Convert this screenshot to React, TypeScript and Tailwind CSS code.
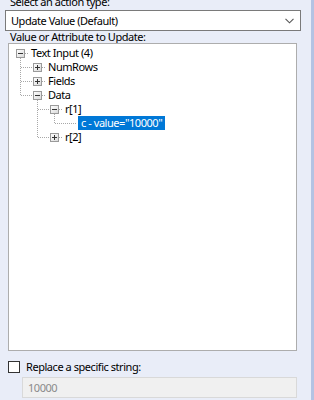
import React from "react";

const font = { fontFamily: '"Noto Sans", "Liberation Sans", sans-serif' };

function Glyph({ open }: { open: boolean }) {
  return (
    <svg width="9" height="9" viewBox="0 0 9 9" className="shrink-0">
      <defs>
        <linearGradient id="gb" x1="0" y1="0" x2="1" y2="1">
          <stop offset="0" stopColor="#ffffff" />
          <stop offset="1" stopColor="#d8d8d8" />
        </linearGradient>
      </defs>
      <rect x="0.5" y="0.5" width="8" height="8" fill="url(#gb)" stroke="#9a9a9a" />
      <line x1="2" y1="4.5" x2="7" y2="4.5" stroke="#333" />
      {!open && <line x1="4.5" y1="2" x2="4.5" y2="7" stroke="#333" />}
    </svg>
  );
}

const txt = "text-[11px] leading-[14px] tracking-[-0.45px] text-[#000]";

function Row({
  level,
  open,
  label,
}: {
  level: number;
  open: boolean;
  label: string;
}) {
  const pads = ["pl-[7px]", "pl-[24px]", "pl-[41px]"];
  return (
    <div className={`flex h-[14px] items-center ${pads[level]}`}>
      <Glyph open={open} />
      <span className={`ml-[6px] ${txt}`}>{label}</span>
    </div>
  );
}

export default function App() {
  return (
    <div className="flex h-[400px] w-[314px] overflow-hidden bg-[#e9edf8]" style={font}>
      <div className="flex w-[311px] flex-col">
        <div className={`mt-[-5px] h-[14px] pl-[10px] ${txt}`}>Select an action type:</div>
        <div className="ml-[5px] mt-[1px] flex h-[21px] w-[296px] items-center justify-between border border-[#7a7a7a] bg-white pl-[5px] pr-[6px]">
          <span className={txt}>Update Value (Default)</span>
          <svg width="9" height="6" viewBox="0 0 9 6">
            <path d="M0.5 0.8 L4.5 4.8 L8.5 0.8" fill="none" stroke="#555" strokeWidth="1.1" />
          </svg>
        </div>
        <div className="h-[12px] pl-[10px] text-[11px] leading-[12px] tracking-[-0.45px] text-[#000]">
          Value or Attribute to Update:
        </div>
        <div className="relative ml-[8px] h-[308px] w-[289px] border border-[#adadad] bg-white pt-[2px]">
          <svg className="absolute left-0 top-0" width="287" height="306">
            <g stroke="#a8a8a8" strokeDasharray="1 1" fill="none">
              <line x1="11.5" y1="14" x2="11.5" y2="51" />
              <line x1="12" y1="23.5" x2="24" y2="23.5" />
              <line x1="12" y1="37.5" x2="24" y2="37.5" />
              <line x1="12" y1="51.5" x2="24" y2="51.5" />
              <line x1="28.5" y1="56" x2="28.5" y2="93" />
              <line x1="29" y1="65.5" x2="41" y2="65.5" />
              <line x1="29" y1="93.5" x2="41" y2="93.5" />
              <line x1="45.5" y1="70" x2="45.5" y2="79" />
              <line x1="46" y1="79.5" x2="68" y2="79.5" />
              <line x1="16" y1="9.5" x2="20" y2="9.5" />
              <line x1="33" y1="23.5" x2="37" y2="23.5" />
              <line x1="33" y1="37.5" x2="37" y2="37.5" />
              <line x1="33" y1="51.5" x2="37" y2="51.5" />
              <line x1="50" y1="65.5" x2="54" y2="65.5" />
              <line x1="50" y1="93.5" x2="54" y2="93.5" />
            </g>
          </svg>
          <div className="relative flex flex-col">
            <Row level={0} open label="Text Input (4)" />
            <Row level={1} open={false} label="NumRows" />
            <Row level={1} open={false} label="Fields" />
            <Row level={1} open label="Data" />
            <Row level={2} open label="r[1]" />
            <div className="flex h-[14px] items-center pl-[69px]">
              <span className="bg-[#0078d7] px-[3px] text-[11px] leading-[14px] tracking-[-0.45px] text-white">
                c - value="10000"
              </span>
            </div>
            <Row level={2} open={false} label="r[2]" />
          </div>
        </div>
        <div className="ml-[8px] mt-[10px] flex h-[12px] items-center">
          <div className="h-[12px] w-[12px] border border-[#333] bg-white" />
          <span className={`ml-[6px] ${txt}`}>Replace a specific string:</span>
        </div>
        <div className="ml-[22px] mt-[4px] flex h-[21px] w-[275px] items-center border border-[#d9d9d9] bg-[#f0f0f0] pl-[5px]">
          <span className="text-[11px] leading-[14px] tracking-[-0.45px] text-[#8a8a8a]">10000</span>
        </div>
      </div>
      <div className="h-full w-[3px] bg-[#b4c3e3]" />
    </div>
  );
}
